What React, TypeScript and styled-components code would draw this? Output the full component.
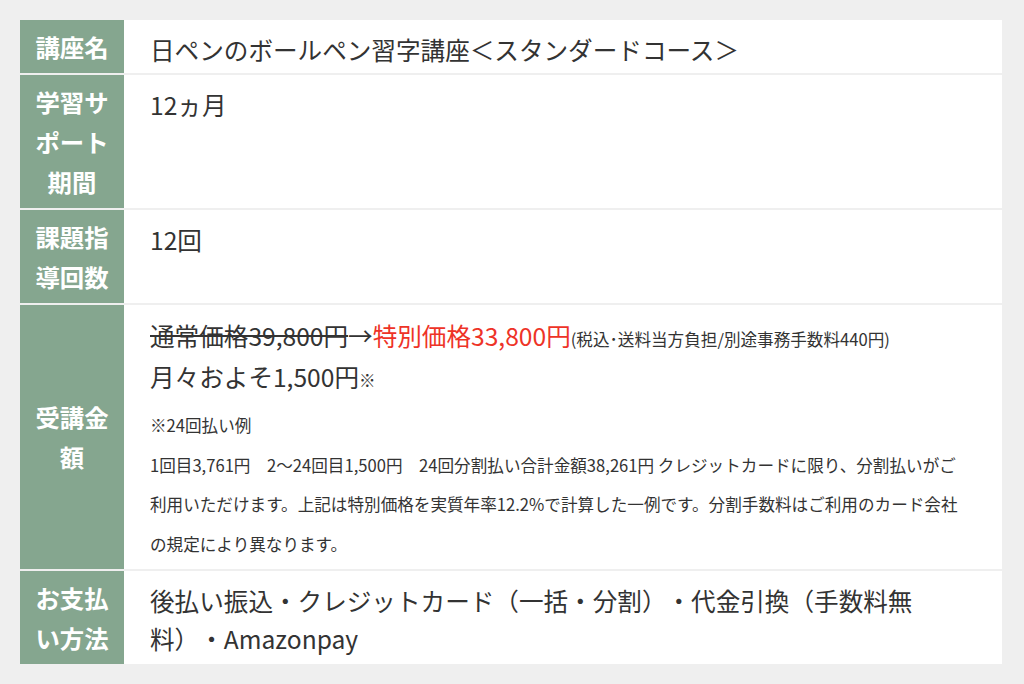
import React from 'react';
import styled, { createGlobalStyle } from 'styled-components';

const GlobalStyle = createGlobalStyle`
  html, body {
    margin: 0;
    padding: 0;
    background: #efefef;
  }
  body {
    font-family: "Noto Sans CJK JP", "Noto Sans", sans-serif;
    color: #333333;
    text-spacing-trim: space-all;
  }
`;

const Page = styled.div`
  padding: 18px 22px 18px 20px;
`;

const Table = styled.table`
  width: 100%;
  border-collapse: separate;
  border-spacing: 0 2px;
`;

const Th = styled.th`
  width: 104px;
  box-sizing: border-box;
  padding: 6.5px 14px;
  background: #85a68f;
  color: #ffffff;
  font-size: 24.4px;
  font-weight: 700;
  line-height: 40px;
  text-align: center;
  vertical-align: middle;
`;

const Td = styled.td`
  padding: 10px 30px 5px 26px;
  background: #ffffff;
  font-size: 24.6px;
  line-height: 38px;
  text-align: left;
  vertical-align: top;
`;

const PriceLine = styled.p`
  margin: 0;
  line-height: 41px;
`;

const Old = styled.span`
  text-decoration: line-through;
`;

const Sale = styled.span`
  color: #ee3327;
`;

const Small = styled.span`
  font-size: 16.6px;
  line-height: 1;
`;

const Note = styled.p`
  margin: 9px 0 0;
  font-size: 16.6px;
  line-height: 39.5px;
`;

type Row = {
  label: string;
  body: React.ReactNode;
};

const rows: Row[] = [
  { label: '講座名', body: '日ペンのボールペン習字講座＜スタンダードコース＞' },
  { label: '学習サポート期間', body: '12ヵ月' },
  { label: '課題指導回数', body: '12回' },
  {
    label: '受講金額',
    body: (
      <>
        <PriceLine>
          <Old>通常価格39,800円</Old>→<Sale>特別価格33,800円</Sale>
          <Small>(税込･送料当方負担/別途事務手数料440円)</Small>
          <br />
          月々およそ1,500円<Small>※</Small>
        </PriceLine>
        <Note>
          ※24回払い例
          <br />
          1回目3,761円　2〜24回目1,500円　24回分割払い合計金額38,261円 クレジットカードに限り、分割払いがご利用いただけます。上記は特別価格を実質年率12.2%で計算した一例です。分割手数料はご利用のカード会社の規定により異なります。
        </Note>
      </>
    ),
  },
  {
    label: 'お支払い方法',
    body: '後払い振込・クレジットカード（一括・分割）・代金引換（手数料無料）・Amazonpay',
  },
];

const App: React.FC = () => {
  return (
    <Page>
      <GlobalStyle />
      <Table>
        <tbody>
          {rows.map((row) => (
            <tr key={row.label}>
              <Th>{row.label}</Th>
              <Td>{row.body}</Td>
            </tr>
          ))}
        </tbody>
      </Table>
    </Page>
  );
};

export default App;
